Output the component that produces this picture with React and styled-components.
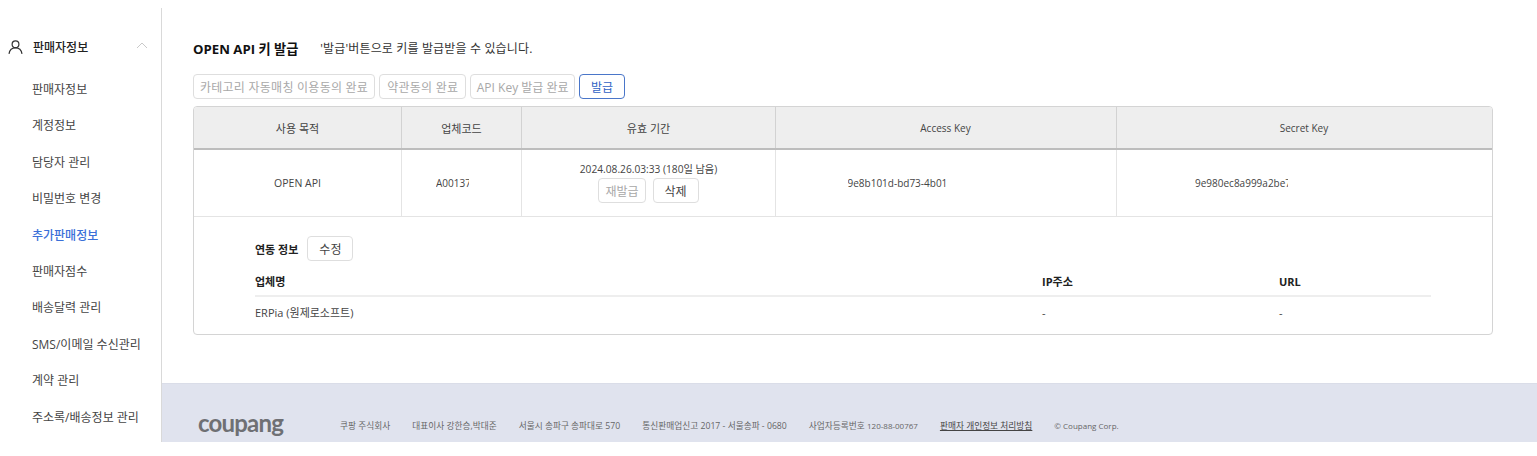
import React from "react";
import styled, { createGlobalStyle } from "styled-components";

const GlobalStyle = createGlobalStyle`
    html, body {
        margin: 0;
        padding: 0;
        background: #fff;
        overflow: hidden;
    }
    body {
        font-family: "Open Sans", "Noto Sans CJK KR", sans-serif;
        color: #333;
        font-size: 11px;
    }
    * {
        box-sizing: border-box;
    }
`;

const Page = styled.div`
    display: flex;
    height: 442px;
    padding-top: 8px;
`;

const Sidebar = styled.aside`
    width: 162px;
    flex-shrink: 0;
    border-right: 1px solid #d9d9d9;
    padding-top: 27px;
`;

const SideHeader = styled.div`
    display: flex;
    align-items: center;
    height: 24px;
    padding-left: 8px;
    color: #222;
    font-size: 12px;
    font-weight: 500;

    span {
        flex: 1;
        margin-left: 10px;
    }

    svg.chevron {
        margin-right: 13px;
        margin-top: -4px;
    }
`;

const SideList = styled.ul`
    list-style: none;
    margin: 13px 0 0;
    padding: 0;
`;

const SideItem = styled.li`
    height: 36.4px;
    line-height: 36px;
    padding-left: 32px;
    font-size: 12px;
    white-space: nowrap;
    color: ${(props) => (props.$active ? "#3a6fd8" : "#444")};
    font-weight: ${(props) => (props.$active ? 500 : 400)};
`;

const Main = styled.main`
    flex: 1;
    display: flex;
    flex-direction: column;
    min-width: 0;
`;

const Content = styled.div`
    flex: 1;
    padding: 31px 44px 0 31px;
`;

const TitleRow = styled.div`
    display: flex;
    align-items: center;
    height: 18px;
    gap: 22px;
`;

const Title = styled.h2`
    margin: 0;
    font-size: 13.2px;
    font-weight: 700;
    color: #111;
    white-space: nowrap;
`;

const Notice = styled.span`
    font-size: 12px;
    letter-spacing: 0.15px;
    color: #333;
    white-space: nowrap;
`;

const StepRow = styled.div`
    display: flex;
    gap: 4px;
    margin-top: 17px;
`;

const Button = styled.button`
    height: 25px;
    padding: 0 ${(props) => props.$pad || 6}px;
    background: #fff;
    border: 1px solid ${(props) => (props.$primary ? "#4a76c9" : "#dedede")};
    border-radius: 4px;
    font-family: inherit;
    font-size: 12px;
    letter-spacing: ${(props) => (props.$spaced ? "0.25px" : "0")};
    white-space: nowrap;
    color: ${(props) =>
        props.$primary ? "#2f62c4" : props.disabled ? "#a8a8a8" : "#444"};
`;

const Card = styled.section`
    margin-top: 7px;
    border: 1px solid #d4d4d4;
    border-radius: 4px;
    overflow: hidden;
`;

const Row = styled.div`
    display: grid;
    grid-template-columns: 208px 120px 254px 341px 1fr;
    height: ${(props) => props.$height}px;
    background: ${(props) => (props.$head ? "#eeeeee" : "#fff")};
    border-bottom: ${(props) => (props.$head ? "2px solid #bdbdbd" : "1px solid #e4e4e4")};
`;

const Cell = styled.div`
    display: flex;
    flex-direction: column;
    align-items: center;
    justify-content: center;
    color: #444;
    font-size: 10.5px;
    border-right: 1px solid ${(props) => (props.$head ? "#d2d2d2" : "#e4e4e4")};

    &:last-child {
        border-right: 0;
    }
`;

const HeadLabel = styled.span`
    font-size: ${(props) => (props.$latin ? "10px" : "11px")};
    margin-left: ${(props) => (props.$latin ? "-1px" : "0")};
`;

const Clipped = styled.div`
    width: ${(props) => props.$width}px;
    margin-left: ${(props) => props.$shift}px;
    font-size: 10px;
    overflow: hidden;
    white-space: nowrap;
`;

const ExpiryCell = styled(Cell)`
    padding-bottom: 2px;
`;

const ExpiryText = styled.div`
    font-size: 10.2px;
    margin-bottom: 2px;
`;

const CellButtons = styled.div`
    display: flex;
    gap: 7px;
`;

const Linked = styled.div`
    padding: 19px 61px 0 61px;
    height: 117px;
`;

const LinkedHead = styled.div`
    display: flex;
    align-items: center;
    gap: 9px;
    font-weight: 700;
    font-size: 11px;
    color: #222;
`;

const LinkedRow = styled.div`
    display: grid;
    grid-template-columns: 787px 237px 1fr;
    align-items: center;
    height: ${(props) => props.$height}px;
    padding-top: ${(props) => (props.$head ? "6px" : "0")};
    border-bottom: ${(props) => (props.$head ? "2px solid #eeeeee" : "0")};
    font-size: 11px;
    font-weight: ${(props) => (props.$head ? 700 : 400)};
    color: ${(props) => (props.$head ? "#222" : "#444")};
`;

const Footer = styled.footer`
    height: 59px;
    flex-shrink: 0;
    display: flex;
    align-items: flex-end;
    padding: 0 0 10px 36px;
    background: #e0e3ee;
    border-top: 1px solid #dadde8;
    font-size: 8.7px;
    color: #666;
    white-space: nowrap;
`;

const Logo = styled.div`
    font-family: "Lato", sans-serif;
    font-size: 24px;
    line-height: 27px;
    font-weight: 700;
    letter-spacing: -0.8px;
    color: #6f7074;
    width: 142px;
    margin-bottom: -4px;
`;

const FooterItems = styled.div`
    display: flex;
    gap: 22px;
    line-height: 12px;
`;

const FooterLink = styled.a`
    color: #444;
    text-decoration: underline;
`;

const FooterSmall = styled.span`
    font-size: 8px;
`;

const menu = [
    "판매자정보",
    "계정정보",
    "담당자 관리",
    "비밀번호 변경",
    "추가판매정보",
    "판매자점수",
    "배송달력 관리",
    "SMS/이메일 수신관리",
    "계약 관리",
    "주소록/배송정보 관리",
];

const footerItems = [
    "쿠팡 주식회사",
    "대표이사 강한승,박대준",
    "서울시 송파구 송파대로 570",
    "통신판매업신고 2017 - 서울송파 - 0680",
];

export default function App() {
    return (
        <Page>
            <GlobalStyle />
            <Sidebar>
                <SideHeader>
                    <svg width="15" height="15" viewBox="0 0 15 15" fill="none" stroke="#333" strokeWidth="1.2">
                        <circle cx="7.5" cy="4.3" r="3.4" />
                        <path d="M1 13.800c.6-3.600 3-5.900 6.500-5.900s5.900 2.300 6.500 5.900" />
                    </svg>
                    <span>판매자정보</span>
                    <svg className="chevron" width="12" height="7" viewBox="0 0 12 7" fill="none" stroke="#c9c9c9" strokeWidth="1">
                        <path d="M1 6l5-5 5 5" />
                    </svg>
                </SideHeader>
                <SideList>
                    {menu.map((item) => (
                        <SideItem key={item} $active={item === "추가판매정보"}>
                            {item}
                        </SideItem>
                    ))}
                </SideList>
            </Sidebar>
            <Main>
                <Content>
                    <TitleRow>
                        <Title>OPEN API 키 발급</Title>
                        <Notice>'발급'버튼으로 키를 발급받을 수 있습니다.</Notice>
                    </TitleRow>
                    <StepRow>
                        <Button disabled $spaced>카테고리 자동매칭 이용동의 완료</Button>
                        <Button disabled $spaced $pad={7}>약관동의 완료</Button>
                        <Button disabled $pad={5.5}>API Key 발급 완료</Button>
                        <Button $primary $pad={11}>발급</Button>
                    </StepRow>
                    <Card>
                        <Row $head $height={43}>
                            <Cell $head><HeadLabel>사용 목적</HeadLabel></Cell>
                            <Cell $head><HeadLabel>업체코드</HeadLabel></Cell>
                            <Cell $head><HeadLabel>유효 기간</HeadLabel></Cell>
                            <Cell $head><HeadLabel $latin>Access Key</HeadLabel></Cell>
                            <Cell $head><HeadLabel $latin>Secret Key</HeadLabel></Cell>
                        </Row>
                        <Row $height={67}>
                            <Cell>OPEN API</Cell>
                            <Cell>
                                <Clipped $width={33} $shift={-18}>A00137</Clipped>
                            </Cell>
                            <ExpiryCell>
                                <ExpiryText>2024.08.26.03:33 (180일 남음)</ExpiryText>
                                <CellButtons>
                                    <Button disabled $pad={6}>재발급</Button>
                                    <Button $pad={11}>삭제</Button>
                                </CellButtons>
                            </ExpiryCell>
                            <Cell>
                                <Clipped $width={99} $shift={-98}>9e8b101d-bd73-4b01</Clipped>
                            </Cell>
                            <Cell>
                                <Clipped $width={93} $shift={-126}>9e980ec8a999a2be7</Clipped>
                            </Cell>
                        </Row>
                        <Linked>
                            <LinkedHead>
                                연동 정보
                                <Button $pad={11}>수정</Button>
                            </LinkedHead>
                            <LinkedRow $head $height={36}>
                                <div>업체명</div>
                                <div>IP주소</div>
                                <div>URL</div>
                            </LinkedRow>
                            <LinkedRow $height={30}>
                                <div>ERPia (원제로소프트)</div>
                                <div>-</div>
                                <div>-</div>
                            </LinkedRow>
                        </Linked>
                    </Card>
                </Content>
                <Footer>
                    <Logo>coupang</Logo>
                    <FooterItems>
                        {footerItems.map((item) => (
                            <span key={item}>{item}</span>
                        ))}
                        <span>사업자등록번호 <FooterSmall>120-88-00767</FooterSmall></span>
                        <FooterLink>판매자 개인정보 처리방침</FooterLink>
                        <FooterSmall>© Coupang Corp.</FooterSmall>
                    </FooterItems>
                </Footer>
            </Main>
        </Page>
    );
}
